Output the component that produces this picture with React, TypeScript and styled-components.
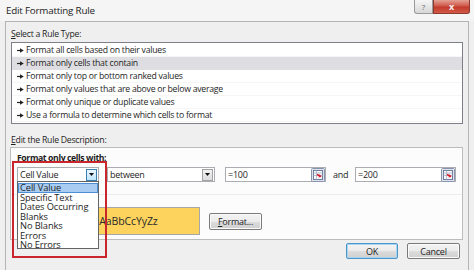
import React from "react";
import styled, { createGlobalStyle } from "styled-components";

const Global = createGlobalStyle`
  html, body { margin: 0; padding: 0; background: #f0f0f0; }
  body { font-family: "Open Sans", "Noto Sans", sans-serif; }
  #root { width: 474px; height: 270px; }
`;

const Dialog = styled.div`
  position: relative;
  width: 474px;
  height: 270px;
  overflow: hidden;
  background: #efefef;
  display: flex;
  flex-direction: column;
  font-family: "Open Sans", "Noto Sans", sans-serif;
  font-size: 8.7px;
  letter-spacing: -0.25px;
  color: #1e1e1e;
`;

const TitleBar = styled.div`
  flex: none;
  height: 21px;
  display: flex;
  align-items: flex-start;
  padding: 0 4px 0 6px;
  background: #f5f5f5;
`;

const Title = styled.div`
  flex: 1;
  font-size: 9.8px;
  letter-spacing: -0.2px;
  line-height: 22px;
  color: #222;
`;

const CaptionButton = styled.div<{ $close?: boolean }>`
  height: 14px;
  box-sizing: border-box;
  width: ${(p) => (p.$close ? 37 : 19)}px;
  display: flex;
  align-items: center;
  justify-content: center;
  letter-spacing: 0;
  font-size: ${(p) => (p.$close ? 9 : 8)}px;
  font-weight: ${(p) => (p.$close ? 700 : 400)};
  color: ${(p) => (p.$close ? "#fbeeee" : "#6c6c6c")};
  border: 1px solid ${(p) => (p.$close ? "#8c3b31" : "#9a9a9a")};
  border-top: none;
  border-radius: ${(p) => (p.$close ? "0 0 3px 0" : "0 0 0 3px")};
  background: ${(p) =>
    p.$close
      ? "linear-gradient(#e3a194 0%, #d0594b 45%, #c23a2c 55%, #d35a47 100%)"
      : "linear-gradient(#f6f6f6 0%, #e6e6e6 50%, #d8d8d8 100%)"};
`;

const Frame = styled.div`
  flex: 1;
  margin: 0 5px;
  border: 1px solid #b4b4b4;
  border-bottom: none;
  padding: 6px 5px 0 5px;
  display: flex;
  flex-direction: column;
`;

const SectionLabel = styled.div<{ $mt?: number }>`
  height: 12px;
  line-height: 12px;
  margin-top: ${(p) => p.$mt ?? 0}px;
  u { text-decoration: underline; text-underline-offset: 1px; }
`;

const ListBox = styled.div`
  margin-top: 2px;
  height: 82px;
  box-sizing: border-box;
  border: 1px solid #7d8088;
  background: #fff;
  padding-top: 1px;
`;

const RuleRow = styled.div<{ $selected?: boolean }>`
  height: 13px;
  box-sizing: border-box;
  display: flex;
  align-items: center;
  gap: 2px;
  padding-left: 5px;
  border-bottom: 1px solid ${(p) => (p.$selected ? "#dedee2" : "#f6f6f6")};
  background: ${(p) => (p.$selected ? "#dedee2" : "transparent")};
`;

const DescPanel = styled.div`
  margin: 1px 0 0 -1px;
  height: 93px;
  box-sizing: border-box;
  border: 1px solid #bcbcbc;
  background: #fcfcfc;
  display: flex;
  flex-direction: column;
`;

const PanelHeading = styled.div`
  margin-top: 4px;
  padding-left: 6px;
  height: 12px;
  line-height: 12px;
  font-weight: 700;
  letter-spacing: -0.4px;
`;

const CriteriaRow = styled.div`
  margin-top: 3px;
  padding-left: 6px;
  height: 15px;
  display: flex;
  align-items: center;
`;

const Field = styled.div<{ $w: number; $ml?: number }>`
  width: ${(p) => p.$w}px;
  margin-left: ${(p) => p.$ml ?? 0}px;
  height: 15px;
  box-sizing: border-box;
  border: 1px solid #abadb3;
  background: #fff;
  display: flex;
  align-items: center;
  padding-left: 2px;
  font-size: 9px;
`;

const FieldText = styled.div`
  flex: 1;
  white-space: nowrap;
  overflow: hidden;
`;

const DropButton = styled.div<{ $hot?: boolean }>`
  width: 11px;
  height: 12px;
  margin-right: 1px;
  box-sizing: border-box;
  display: flex;
  align-items: center;
  justify-content: center;
  border: 1px solid ${(p) => (p.$hot ? "#3c7fb1" : "#a3a3a3")};
  background: ${(p) =>
    p.$hot ? "linear-gradient(#eaf6fd, #bee6fd)" : "linear-gradient(#f2f2f2, #dcdcdc)"};
`;

const RefButton = styled.div`
  width: 14px;
  height: 14px;
  display: flex;
`;

const AndLabel = styled.div`
  width: 22px;
  margin-left: 7px;
  font-size: 9px;
`;

const Divider = styled.div`
  margin-top: 12px;
  height: 1px;
  background: #ececec;
`;

const PreviewRow = styled.div`
  margin-top: 12px;
  padding-left: 6px;
  height: 28px;
  display: flex;
  align-items: center;
`;

const PreviewSpacer = styled.div`
  width: 40px;
`;

const PreviewBox = styled.div`
  width: 143px;
  height: 28px;
  box-sizing: border-box;
  border: 1px solid #a6a6a6;
  background: #fdd35e;
  display: flex;
  align-items: center;
  justify-content: center;
  font-size: 10.5px;
  letter-spacing: -0.1px;
  color: #2a2a2a;
`;

const PushButton = styled.div<{ $w: number; $h?: number; $ml?: number; $default?: boolean }>`
  width: ${(p) => p.$w}px;
  height: ${(p) => p.$h ?? 16}px;
  margin-left: ${(p) => p.$ml ?? 0}px;
  box-sizing: border-box;
  border: 1px solid ${(p) => (p.$default ? "#4a94c9" : "#7a7a7a")};
  border-radius: 2px;
  box-shadow: ${(p) => (p.$default ? "inset 0 0 0 1px #a9d6f2" : "inset 0 0 0 1px #fbfbfb")};
  background: linear-gradient(#f3f3f3 0%, #ebebeb 50%, #dddddd 51%, #cfcfcf 100%);
  display: flex;
  align-items: center;
  justify-content: center;
  font-size: 9px;
  color: #1e1e1e;
  u { text-decoration: underline; text-underline-offset: 1px; }
`;

const ButtonRow = styled.div`
  margin-top: 3px;
  padding-right: 3px;
  display: flex;
  justify-content: flex-end;
  gap: 9px;
`;

const DropList = styled.div`
  position: absolute;
  left: 17px;
  top: 181px;
  width: 82px;
  height: 68px;
  box-sizing: border-box;
  border: 1px solid #646464;
  background: #fff;
  padding: 1px 0 0 0;
  font-size: 9.3px;
  letter-spacing: -0.1px;
`;

const DropItem = styled.div<{ $selected?: boolean }>`
  height: 9.5px;
  line-height: 9.5px;
  padding-left: 2px;
  box-sizing: border-box;
  white-space: nowrap;
  background: ${(p) => (p.$selected ? "#a9cdf2" : "transparent")};
  outline: ${(p) => (p.$selected ? "1px solid #4d8fd6" : "none")};
  outline-offset: -1px;
`;

const RedMark = styled.div`
  position: absolute;
  left: 12px;
  top: 161px;
  width: 95px;
  height: 97px;
  box-sizing: border-box;
  border: 2px solid #c9252c;
  pointer-events: none;
`;

const Arrow = () => (
  <svg width="7" height="5" viewBox="0 0 7 5">
    <path d="M0 2.5h3.5" stroke="#222" strokeWidth="1.2" />
    <path d="M3 0.3L6.8 2.5L3 4.7z" fill="#222" />
  </svg>
);

const Tri = () => (
  <svg width="5" height="3" viewBox="0 0 5 3">
    <path d="M0 0h5L2.5 3z" fill="#111" />
  </svg>
);

const RefIcon = () => (
  <svg width="14" height="14" viewBox="0 0 14 14">
    <rect x="0.5" y="0.5" width="13" height="13" rx="1" fill="#dfe3ec" stroke="#8893ae" />
    <rect x="2.5" y="2.5" width="9" height="9" fill="#f7f8fb" stroke="#6f7d9c" />
    <path d="M2.5 5h9M2.5 7.5h9M5.5 2.5v9" stroke="#a9b3c9" strokeWidth="0.8" />
    <path d="M6 6.5L10 8.5" stroke="#d4202a" strokeWidth="1.4" />
    <path d="M8.2 6.3L10.6 8.7L7.6 9.4z" fill="#d4202a" />
  </svg>
);

const ruleTypes = [
  "Format all cells based on their values",
  "Format only cells that contain",
  "Format only top or bottom ranked values",
  "Format only values that are above or below average",
  "Format only unique or duplicate values",
  "Use a formula to determine which cells to format",
];

const cellOptions = [
  "Cell Value",
  "Specific Text",
  "Dates Occurring",
  "Blanks",
  "No Blanks",
  "Errors",
  "No Errors",
];

export default function App() {
  return (
    <>
      <Global />
      <Dialog>
        <TitleBar>
          <Title>Edit Formatting Rule</Title>
          <CaptionButton>?</CaptionButton>
          <CaptionButton $close>x</CaptionButton>
        </TitleBar>
        <Frame>
          <SectionLabel>
            <u>S</u>elect a Rule Type:
          </SectionLabel>
          <ListBox>
            {ruleTypes.map((t, i) => (
              <RuleRow key={t} $selected={i === 1}>
                <Arrow />
                <span>{t}</span>
              </RuleRow>
            ))}
          </ListBox>
          <SectionLabel $mt={10}>
            <u>E</u>dit the Rule Description:
          </SectionLabel>
          <DescPanel>
            <PanelHeading>Format only cells with:</PanelHeading>
            <CriteriaRow>
              <Field $w={82}>
                <FieldText>Cell Value</FieldText>
                <DropButton $hot>
                  <Tri />
                </DropButton>
              </Field>
              <Field $w={108} $ml={8}>
                <FieldText>between</FieldText>
                <DropButton>
                  <Tri />
                </DropButton>
              </Field>
              <Field $w={101} $ml={10}>
                <FieldText>=100</FieldText>
                <RefButton>
                  <RefIcon />
                </RefButton>
              </Field>
              <AndLabel>and</AndLabel>
              <Field $w={101}>
                <FieldText>=200</FieldText>
                <RefButton>
                  <RefIcon />
                </RefButton>
              </Field>
            </CriteriaRow>
            <Divider />
            <PreviewRow>
              <PreviewSpacer />
              <PreviewBox>AaBbCcYyZz</PreviewBox>
              <PushButton $w={53} $h={17} $ml={9}>
                <span>
                  <u>F</u>ormat...
                </span>
              </PushButton>
            </PreviewRow>
          </DescPanel>
          <ButtonRow>
            <PushButton $w={52} $default>
              OK
            </PushButton>
            <PushButton $w={53}>Cancel</PushButton>
          </ButtonRow>
        </Frame>
        <DropList>
          {cellOptions.map((o, i) => (
            <DropItem key={o} $selected={i === 0}>
              {o}
            </DropItem>
          ))}
        </DropList>
        <RedMark />
      </Dialog>
    </>
  );
}
